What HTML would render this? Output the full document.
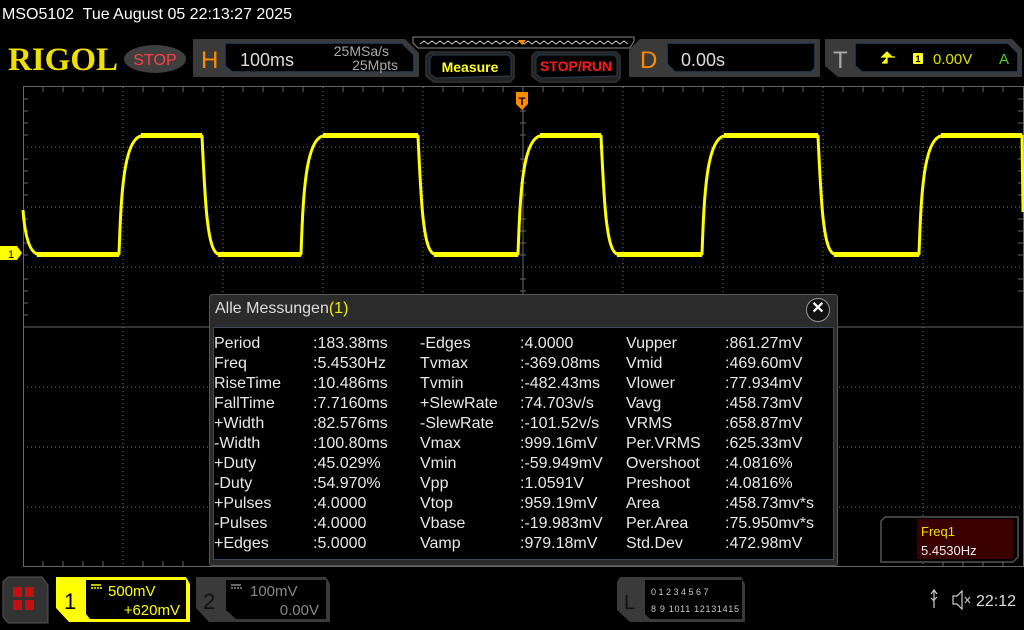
<!DOCTYPE html>
<html><head><meta charset="utf-8"><style>
*{margin:0;padding:0;box-sizing:border-box}
body{width:1024px;height:630px;background:#000;overflow:hidden;position:relative;font-family:"Liberation Sans",Arial,sans-serif;color:#fff}
.a{position:absolute;white-space:nowrap}
.dlg{position:absolute;left:209px;top:294px;width:629px;height:272px;background:#2b2b2b;border:1px solid #555;border-radius:3px}
.body{position:absolute;left:3px;top:32px;right:3px;bottom:5px;background:#000;border:1px solid #3a4c5c}
.row{position:absolute;font-size:16px;color:#e8e8e8;line-height:20px}
</style></head><body>
<div class="a" style="left:2px;top:6px;font-size:16px;color:#fff">MSO5102&nbsp; Tue August 05 22:13:27 2025</div>

<svg class="a" style="left:0;top:0" width="1024" height="630">
 <text x="8" y="70" font-family="Liberation Serif" font-weight="bold" font-size="33" fill="#f0e000" textLength="110" lengthAdjust="spacingAndGlyphs">RIGOL</text>
 <ellipse cx="155" cy="59" rx="31" ry="14" fill="#3f3f3f"/>
 <text x="155" y="65" text-anchor="middle" font-size="16" fill="#ff4040">STOP</text>
 <path d="M193,39 L405,39 L419,53 L419,77 L193,77 Z" fill="#3a3a3a"/>
 <path d="M225,43 L402,43 L414,55 L414,72 L232,72 L225,66 Z" fill="#000" stroke="#2a4050" stroke-width="1.5"/>
 <text x="201" y="68" font-size="24" fill="#ff8a00">H</text>
 <text x="240" y="66" font-size="18" fill="#ddd">100ms</text>
 <text x="389" y="56" font-size="14" fill="#aaa" text-anchor="end">25MSa/s</text>
 <text x="398" y="70" font-size="14" fill="#aaa" text-anchor="end">25Mpts</text>
 <path d="M413,37 L634,37 L634,41 L630,48 L418,48 L413,43 Z" fill="#000" stroke="#888" stroke-width="1"/>
 <polyline points="420,44 424,41 428,44 432,41 436,44 440,41 444,44 448,41 452,44 456,41 460,44 464,41 468,44 472,41 476,44 480,41 484,44 488,41 492,44 496,41 500,44 504,41 508,44 512,41 516,44 520,41 524,44 528,41 532,44 536,41 540,44 544,41 548,44 552,41 556,44 560,41 564,44 568,41 572,44 576,41 580,44 584,41 588,44 592,41 596,44 600,41 604,44 608,41 612,44 616,41 620,44 624,41 628,44" fill="none" stroke="#ccc" stroke-width="1"/>
 <path d="M518,40 L526,40 L522,45 Z" fill="#ff8a00"/>
 <path d="M430,52 L510,52 L514,56 L514,78 L510,82 L434,82 L426,76 L426,56 Z" fill="#222" stroke="#333" stroke-width="1.5"/>
 <path d="M433,55 L508,55 L511,58 L511,76 L436,78 L430,74 L430,58 Z" fill="#000" stroke="#2a4050"/>
 <text x="470" y="72" text-anchor="middle" font-size="14" font-weight="bold" fill="#ffff20">Measure</text>
 <path d="M536,52 L616,52 L620,56 L620,78 L616,82 L540,82 L532,76 L532,56 Z" fill="#222" stroke="#333" stroke-width="1.5"/>
 <path d="M539,55 L614,55 L617,58 L617,76 L541,78 L536,74 L536,58 Z" fill="#000" stroke="#2a4050"/>
 <text x="576" y="71" text-anchor="middle" font-size="14" font-weight="bold" fill="#ff1a1a">STOP/RUN</text>
 <path d="M640,39 L820,39 L820,77 L629,77 L629,50 Z" fill="#3a3a3a"/>
 <path d="M667,43 L815,43 L815,68 L811,72 L675,72 L667,64 Z" fill="#000" stroke="#2a4050" stroke-width="1.5"/>
 <text x="640" y="68" font-size="24" fill="#ff8a00">D</text>
 <text x="681" y="66" font-size="18" fill="#ddd">0.00s</text>
 <path d="M825,39 L1012,39 L1022,49 L1022,77 L838,77 L825,66 Z" fill="#3a3a3a"/>
 <path d="M855,43 L1008,43 L1018,53 L1018,72 L862,72 L855,66 Z" fill="#000" stroke="#2a4050" stroke-width="1.5"/>
 <text x="833" y="68" font-size="24" fill="#aaa">T</text>
 <path d="M882,57 L887,52 L892,57 Z M887,57 L887,63 L882,63 M887,57 L895,57" fill="#ffff20" stroke="#ffff20" stroke-width="1.3"/>
 <rect x="913" y="53" width="10" height="11" rx="1" fill="#ffff20"/>
 <text x="918" y="62" text-anchor="middle" font-size="9" font-weight="bold" fill="#000">1</text>
 <text x="933" y="64" font-size="15" fill="#e0e000">0.00V</text>
 <text x="999" y="64" font-size="15" fill="#50d020">A</text>

 <g stroke="#777" stroke-width="1" stroke-dasharray="1,3">
  <line x1="123" y1="87" x2="123" y2="566"/><line x1="223" y1="87" x2="223" y2="566"/><line x1="323" y1="87" x2="323" y2="566"/><line x1="423" y1="87" x2="423" y2="566"/><line x1="623" y1="87" x2="623" y2="566"/><line x1="723" y1="87" x2="723" y2="566"/><line x1="823" y1="87" x2="823" y2="566"/><line x1="923" y1="87" x2="923" y2="566"/>
  <line x1="23" y1="147" x2="1023" y2="147"/><line x1="23" y1="207" x2="1023" y2="207"/><line x1="23" y1="267" x2="1023" y2="267"/><line x1="23" y1="387" x2="1023" y2="387"/><line x1="23" y1="447" x2="1023" y2="447"/><line x1="23" y1="507" x2="1023" y2="507"/>
 </g>
 <g stroke="#666" stroke-width="1">
  <rect x="23.5" y="86.5" width="1000" height="480" fill="none"/>
  <line x1="523" y1="87" x2="523" y2="566"/>
  <line x1="23" y1="327" x2="1023" y2="327"/>
 </g>
 <g stroke="#666" stroke-width="1">
  <path d="M43,87v5M63,87v5M83,87v5M103,87v5M143,87v5M163,87v5M183,87v5M203,87v5M243,87v5M263,87v5M283,87v5M303,87v5M343,87v5M363,87v5M383,87v5M403,87v5M443,87v5M463,87v5M483,87v5M503,87v5M543,87v5M563,87v5M583,87v5M603,87v5M643,87v5M663,87v5M683,87v5M703,87v5M743,87v5M763,87v5M783,87v5M803,87v5M843,87v5M863,87v5M883,87v5M903,87v5M943,87v5M963,87v5M983,87v5M1003,87v5"/>
  <path d="M43,566v-5M63,566v-5M83,566v-5M103,566v-5M143,566v-5M163,566v-5M183,566v-5M943,566v-5M963,566v-5M983,566v-5M1003,566v-5"/>
  <path d="M23,99h5M23,111h5M23,123h5M23,135h5M23,159h5M23,171h5M23,183h5M23,195h5M23,219h5M23,231h5M23,243h5M23,255h5M23,279h5M23,291h5M23,303h5M23,315h5M1023,99h-5M1023,111h-5M1023,123h-5M1023,135h-5M1023,159h-5M1023,171h-5M1023,183h-5M1023,195h-5M1023,219h-5M1023,231h-5M1023,243h-5M1023,255h-5M1023,279h-5M1023,291h-5"/>
  <path d="M520,99h6M520,111h6M520,123h6M520,135h6M520,159h6M520,171h6M520,183h6M520,195h6M520,219h6M520,231h6M520,243h6M520,255h6M520,279h6M520,291h6"/>
 </g>
 <path d="M23,210 Q26,250 37,254 L119,254 C121,200 123,140 141,136 L202,136 C205,200 207,250 218,254 L301,254 C303,200 305,140 323,136 L418,136 C421,200 423,250 434,254 L518,254 C520,200 522,140 540,136 L601,136 C604,200 606,250 617,254 L702,254 C704,200 706,140 724,136 L818,136 C821,200 823,250 834,254 L919,254 C921,200 923,140 941,136 L1022,136 L1023,212" fill="none" stroke="#ffff00" stroke-width="3" stroke-linejoin="round"/>
 <g stroke="#ffff00" stroke-width="5">
  <path d="M37,254.5H119M218,254.5H301M434,254.5H518M617,254.5H702M834,254.5H919M141,135.5H202M323,135.5H418M540,135.5H601M724,135.5H818M941,135.5H1022"/>
 </g>
 <path d="M0,246 L17,246 L22,253 L17,260 L0,260 Z" fill="#ffff00"/>
 <text x="8" y="258" font-size="11" fill="#000">1</text>
 <path d="M516,92 L528,92 L528,104 L522,110 L516,104 Z" fill="#ff8a00"/>
 <text x="522" y="105" text-anchor="middle" font-size="11" font-weight="bold" fill="#000">T</text>
</svg>

<div class="dlg">
 <div class="a" style="left:5px;top:5px;font-size:16px;color:#ddd">Alle Messungen<span style="color:#f0f000">(1)</span></div>
 <div class="a" style="left:596px;top:3px;width:24px;height:24px;border-radius:50%;background:#111;border:1.5px solid #999;color:#fff;font-size:16px;font-weight:bold;text-align:center;line-height:20px">✕</div>
 <div class="body"></div>
</div>
<div class="row a" style="left:214px;top:334px">Period<br>Freq<br>RiseTime<br>FallTime<br>+Width<br>-Width<br>+Duty<br>-Duty<br>+Pulses<br>-Pulses<br>+Edges</div>
<div class="row a" style="left:313px;top:334px">:183.38ms<br>:5.4530Hz<br>:10.486ms<br>:7.7160ms<br>:82.576ms<br>:100.80ms<br>:45.029%<br>:54.970%<br>:4.0000<br>:4.0000<br>:5.0000</div>
<div class="row a" style="left:420px;top:334px">-Edges<br>Tvmax<br>Tvmin<br>+SlewRate<br>-SlewRate<br>Vmax<br>Vmin<br>Vpp<br>Vtop<br>Vbase<br>Vamp</div>
<div class="row a" style="left:520px;top:334px">:4.0000<br>:-369.08ms<br>:-482.43ms<br>:74.703v/s<br>:-101.52v/s<br>:999.16mV<br>:-59.949mV<br>:1.0591V<br>:959.19mV<br>:-19.983mV<br>:979.18mV</div>
<div class="row a" style="left:626px;top:334px">Vupper<br>Vmid<br>Vlower<br>Vavg<br>VRMS<br>Per.VRMS<br>Overshoot<br>Preshoot<br>Area<br>Per.Area<br>Std.Dev</div>
<div class="row a" style="left:725px;top:334px">:861.27mV<br>:469.60mV<br>:77.934mV<br>:458.73mV<br>:658.87mV<br>:625.33mV<br>:4.0816%<br>:4.0816%<br>:458.73mv*s<br>:75.950mv*s<br>:472.98mV</div>

<svg class="a" style="left:0;top:0" width="1024" height="630">
 <path d="M885,517 L1018,517 L1018,557 L1013,562 L881,562 L881,521 Z" fill="#000" stroke="#555" stroke-width="1.5"/>
 <rect x="917" y="519" width="96" height="40" fill="#3a0000"/>
 <text x="921" y="536" font-size="13" fill="#f0e000">Freq1</text>
 <text x="921" y="555" font-size="13" fill="#eee">5.4530Hz</text>
 <path d="M8,577 L42,577 L48,585 L48,623 L8,623 L3,617 L3,582 Z" fill="#333" stroke="#555"/>
 <rect x="13" y="587" width="9" height="10" fill="#c01010"/><rect x="25" y="587" width="9" height="10" fill="#c01010"/>
 <rect x="13" y="600" width="9" height="10" fill="#c01010"/><rect x="25" y="600" width="9" height="10" fill="#c01010"/>
 <path d="M56,577 L186,577 L190,584 L190,622 L69,622 L56,608 Z" fill="#ffff00"/>
 <path d="M86,580 L186,580 L186,619 L90,619 L86,614 Z" fill="#000"/>
 <text x="64" y="609" font-size="22" fill="#000">1</text>
 <path d="M91,585h10M91,588h2M94,588h2M97,588h2M100,588h2" stroke="#ffff00" stroke-width="1.5"/>
 <text x="108" y="596" font-size="15" fill="#ffff00">500mV</text>
 <text x="180" y="615" font-size="15" fill="#ffff00" text-anchor="end">+620mV</text>
 <path d="M196,577 L326,577 L330,584 L330,622 L209,622 L196,608 Z" fill="#3a3a3a"/>
 <path d="M226,580 L326,580 L326,619 L236,619 L226,610 Z" fill="#000"/>
 <text x="203" y="609" font-size="22" fill="#111">2</text>
 <path d="M231,585h10M231,588h2M234,588h2M237,588h2M240,588h2" stroke="#888" stroke-width="1.5"/>
 <text x="250" y="596" font-size="15" fill="#888">100mV</text>
 <text x="319" y="615" font-size="15" fill="#888" text-anchor="end">0.00V</text>
 <path d="M620,577 L741,577 L745,584 L745,622 L630,622 L617,610 L617,582 Z" fill="#3a3a3a"/>
 <path d="M645,580 L742,580 L742,619 L650,619 L645,614 Z" fill="#000"/>
 <text x="624" y="609" font-size="20" fill="#111">L</text>
 <text x="651" y="595" font-size="9" fill="#ccc">0 1 2 3  4 5 6 7</text>
 <text x="651" y="612" font-size="9" fill="#ccc" textLength="88">8 9 1011 12131415</text>
 <path d="M934,590 L934,608 M931,594 L934,590 L937,594 M931,598 L934,601 M937,597 L934,600" stroke="#ccc" stroke-width="1.2" fill="none"/>
 <path d="M953,596 L957,596 L962,591 L962,609 L957,604 L953,604 Z" fill="none" stroke="#ccc" stroke-width="1.2"/>
 <path d="M965,597 L970,603 M970,597 L965,603" stroke="#ccc"/>
 <text x="976" y="606" font-size="16" fill="#ddd">22:12</text>
</svg>
</body></html>
